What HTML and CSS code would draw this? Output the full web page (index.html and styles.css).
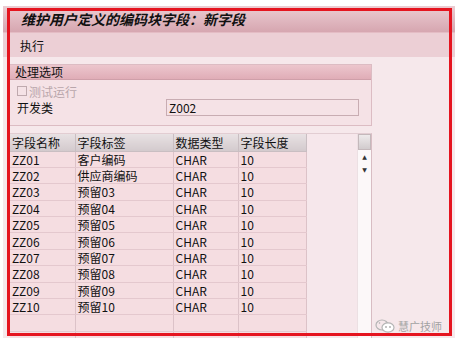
FILE: index.html
```html
<!DOCTYPE html>
<html>
    <head>
        <title>新字段</title>
        <link rel="stylesheet" href="styles.css">
    </head>
    <body>
        <div class="shot">
            <div class="titlebar">维护用户定义的编码块字段：新字段</div>
            <div class="toolbar">执行</div>
            <div class="content">
                <div class="main">
                    <div class="group">
                        <div class="group-head">处理选项</div>
                        <div class="group-body">
                            <div class="check"><span class="box"></span>测试运行</div>
                            <div class="field">
                                <span class="field-label">开发类</span>
                                <span class="field-input">Z002</span>
                            </div>
                        </div>
                    </div>
                    <div class="grid">
                        <table class="fields">
                            <tr class="head">
                                <th class="c1">字段名称</th>
                                <th class="c2">字段标签</th>
                                <th class="c3">数据类型</th>
                                <th class="c4">字段长度</th>
                            </tr>
                            <tr><td>ZZ01</td><td>客户编码</td><td>CHAR</td><td>10</td></tr>
                            <tr><td>ZZ02</td><td>供应商编码</td><td>CHAR</td><td>10</td></tr>
                            <tr><td>ZZ03</td><td>预留03</td><td>CHAR</td><td>10</td></tr>
                            <tr><td>ZZ04</td><td>预留04</td><td>CHAR</td><td>10</td></tr>
                            <tr><td>ZZ05</td><td>预留05</td><td>CHAR</td><td>10</td></tr>
                            <tr><td>ZZ06</td><td>预留06</td><td>CHAR</td><td>10</td></tr>
                            <tr><td>ZZ07</td><td>预留07</td><td>CHAR</td><td>10</td></tr>
                            <tr><td>ZZ08</td><td>预留08</td><td>CHAR</td><td>10</td></tr>
                            <tr><td>ZZ09</td><td>预留09</td><td>CHAR</td><td>10</td></tr>
                            <tr><td>ZZ10</td><td>预留10</td><td>CHAR</td><td>10</td></tr>
                            <tr><td></td><td></td><td></td><td></td></tr>
                            <tr><td></td><td></td><td></td><td></td></tr>
                        </table>
                        <div class="filler"></div>
                        <div class="scrollbar">
                            <div class="thumb"></div>
                            <div class="arrow">&#9650;</div>
                            <div class="arrow">&#9660;</div>
                        </div>
                    </div>
                </div>
                <div class="side">
                    <div class="watermark">
                        <svg width="20" height="14" viewBox="0 0 20 14">
                            <ellipse cx="7" cy="6" rx="6" ry="5" fill="none" stroke="#b5b5b5" stroke-width="1.2"/>
                            <ellipse cx="13" cy="8.5" rx="6" ry="4.6" fill="#fff" stroke="#b5b5b5" stroke-width="1.2"/>
                            <circle cx="11" cy="8" r="0.9" fill="#aaa"/>
                            <circle cx="15" cy="8" r="0.9" fill="#aaa"/>
                            <circle cx="4.5" cy="4" r="0.8" fill="#aaa"/>
                        </svg>
                        <span>慧广技师</span>
                    </div>
                </div>
            </div>
        </div>
        <div class="frame"></div>
    </body>
</html>
```

FILE: styles.css
```css
body {
    margin: 0;
    padding: 6px 0 0 3px;
    background: #ffffff;
    font-family: "Noto Sans CJK SC", sans-serif;
    font-size: 12px;
    color: #111;
}

.shot {
    width: 452px;
    height: 332px;
    background: #f6e8eb;
    display: flex;
    flex-direction: column;
    overflow: hidden;
}

.titlebar {
    height: 26px;
    line-height: 26px;
    padding-left: 18px;
    background: linear-gradient(#ecccd2, #d6a6b0);
    font-size: 14px;
    font-weight: bold;
    font-style: italic;
    color: #111;
    white-space: nowrap;
}

.toolbar {
    height: 25px;
    line-height: 25px;
    padding-left: 17px;
    background: #eccfd5;
    border-top: 1px solid #e4bcc4;
    box-sizing: border-box;
}

.content {
    flex: 1;
    display: flex;
    padding: 7px 0 0 7px;
}

.main {
    width: 362px;
    display: flex;
    flex-direction: column;
}

.group {
    height: 62px;
    background: #f5e2e6;
    border: 1px solid #dcbcc3;
    border-left: none;
    box-sizing: border-box;
}

.group-head {
    height: 14px;
    line-height: 14px;
    padding-left: 5px;
    background: linear-gradient(#ecc6cd, #e0adb7);
    border-bottom: 1px solid #cf9fa9;
}

.group-body {
    padding: 3px 0 0 7px;
}

.check {
    height: 16px;
    display: flex;
    align-items: center;
    color: #b9a6ab;
}

.box {
    width: 8px;
    height: 8px;
    border: 1px solid #bfa9ae;
    margin-right: 2px;
}

.field {
    height: 17px;
    display: flex;
    align-items: center;
}

.field-label {
    width: 149px;
}

.field-input {
    width: 193px;
    height: 17px;
    line-height: 15px;
    box-sizing: border-box;
    border: 1px solid #c8acb2;
    padding-left: 2px;
}

.grid {
    flex: 1;
    margin-top: 7px;
    display: flex;
    background: #f6e7eb;
    border-right: 1px solid #d8bdc3;
    border-top: 1px solid #e2cdd2;
}

.fields {
    border-collapse: collapse;
    align-self: flex-start;
}

.fields th,
.fields td {
    height: 16.4px;
    padding: 0 0 0 2px;
    text-align: left;
    font-weight: normal;
    white-space: nowrap;
    line-height: 15px;
    box-sizing: border-box;
}

.fields td {
    background: #f5dde1;
    border-bottom: 1px solid #e4c8ce;
    border-right: 1px solid #dcc2c8;
}

.fields .head th {
    height: 17px;
    background: linear-gradient(#e8e1e3, #d3cacd);
    border-right: 1px solid #c9bec2;
    border-bottom: 1px solid #c9bec2;
}

.c1 { width: 65px; }
.c2 { width: 98px; }
.c3 { width: 65px; }
.c4 { width: 68px; }

.filler {
    flex: 1;
}

.scrollbar {
    width: 13px;
    background: #fcf8f9;
    border-left: 1px solid #ece0e3;
    display: flex;
    flex-direction: column;
    align-items: center;
}

.thumb {
    width: 13px;
    height: 16px;
    box-sizing: border-box;
    border: 1px solid #c4b8bb;
    background: linear-gradient(#eeeaeb, #d1cbcd);
}

.arrow {
    font-size: 6px;
    line-height: 13px;
    color: #333;
    font-family: "DejaVu Sans", sans-serif;
}

.side {
    flex: 1;
    display: flex;
    flex-direction: column;
    justify-content: flex-end;
    padding: 0 0 14px 3px;
}

.watermark {
    display: flex;
    align-items: center;
    gap: 3px;
    color: #a3a3a3;
    font-size: 11px;
}

.frame {
    position: absolute;
    left: 7px;
    top: 8px;
    width: 439px;
    height: 322px;
    border: 3px solid #e5141f;
}
```
